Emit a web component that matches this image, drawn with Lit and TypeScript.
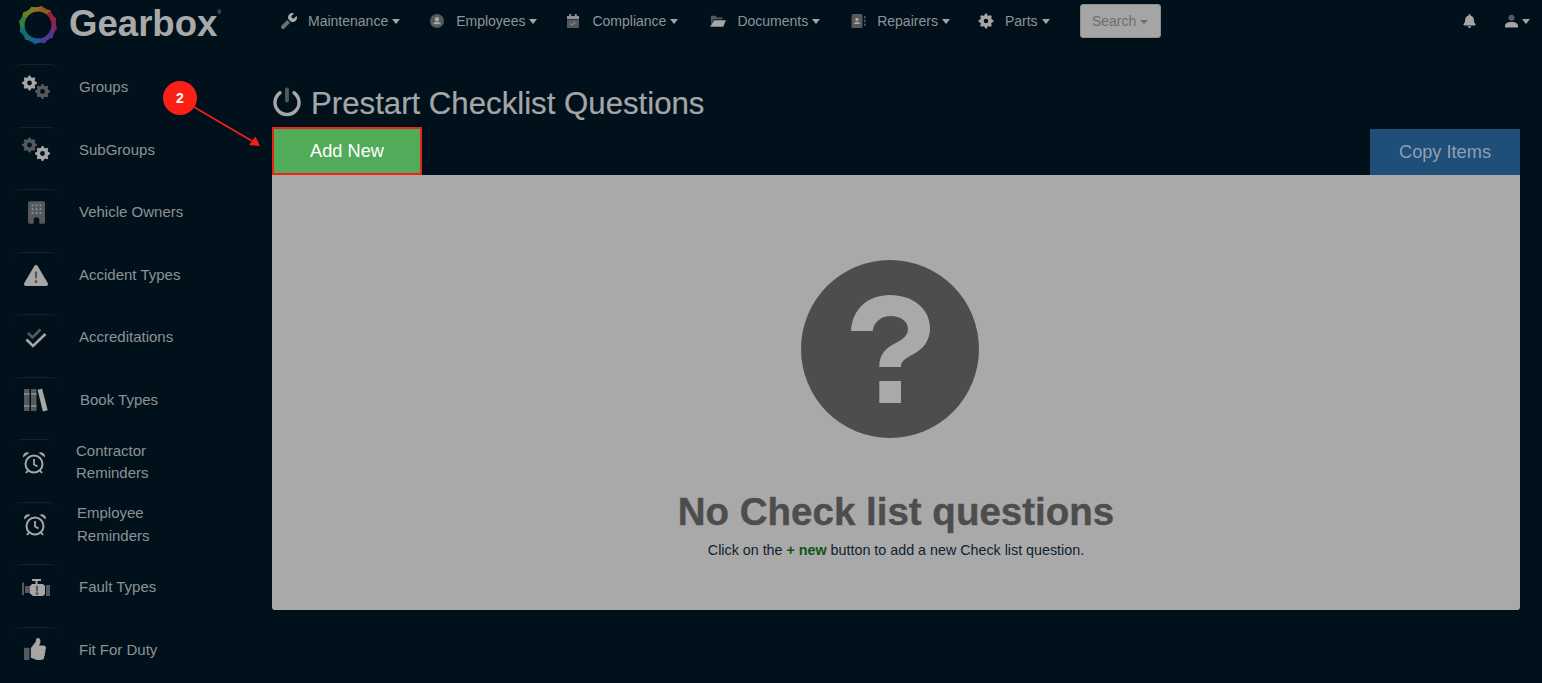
import { LitElement, html, css, svg } from "lit";
import { customElement } from "lit/decorators.js";

const L = "#a6a6a6";
const D = "#55595c";

function gear(cx: number, cy: number, r: number, hole: number, teeth = 8) {
  let d = "";
  const n = teeth * 4;
  for (let i = 0; i < n; i++) {
    const a = ((i - 0.5) / n) * Math.PI * 2;
    const rr = i % 4 === 0 || i % 4 === 1 ? r : r * 0.78;
    d += `${i ? "L" : "M"}${(cx + rr * Math.cos(a)).toFixed(2)} ${(cy + rr * Math.sin(a)).toFixed(2)}`;
  }
  d += `Z M${cx - hole} ${cy}a${hole} ${hole} 0 1 0 ${hole * 2} 0a${hole} ${hole} 0 1 0 ${-hole * 2} 0Z`;
  return d;
}

const BELL = "M224 512c35.32 0 63.97-28.65 63.97-64H160.03c0 35.35 28.65 64 63.97 64zm215.39-149.71c-19.32-20.76-55.47-51.99-55.47-154.29 0-77.7-54.48-139.9-127.94-155.16V32c0-17.67-14.32-32-31.98-32s-31.98 14.33-31.98 32v20.84C118.56 68.1 64.08 130.3 64.08 208c0 102.3-36.15 133.53-55.47 154.29-6 6.45-8.66 14.16-8.61 21.71.11 16.4 12.98 32 32.1 32h383.8c19.12 0 32-15.6 32.1-32 .05-7.55-2.61-15.27-8.61-21.71z";
const THUMB = "M384 81.452c0 42.416-25.97 66.208-33.277 94.548h101.723c33.397 0 59.397 27.746 59.553 58.098.084 17.938-7.546 37.249-19.439 49.197l-.11.11c9.836 23.337 8.237 56.037-9.308 79.469 8.681 25.895-.069 57.704-16.382 74.757 4.298 17.598 2.244 32.575-6.148 44.632C440.202 511.587 389.616 512 346.839 512l-2.845-.001c-48.287-.017-87.806-17.598-119.56-31.725-15.957-7.099-36.821-15.887-52.651-16.178-6.54-.12-11.783-5.457-11.783-11.998v-213.77c0-3.2 1.282-6.271 3.558-8.521 39.614-39.144 56.648-80.587 89.117-113.111 14.804-14.832 20.188-37.236 25.393-58.902C282.515 39.293 291.817 0 312 0c24 0 72 8 72 81.452z";

const navIcons: Record<string, unknown> = {
  wrench: svg`<svg viewBox="0 0 512 512" width="16" height="16"><path fill="#6d7073" d="M18.74 402.76L200 222l90 90-180.76 181.26c-25 25-65.5 25-90.5 0s-25-65.5 0-90.5z"/><path fill="#a9abac" d="M507.73 109.1c-2.24-9.03-13.54-12.09-20.12-5.51l-74.36 74.36-67.88-11.31-11.31-67.88 74.36-74.36c6.62-6.62 3.43-17.9-5.66-20.16-47.38-11.74-99.55.91-136.58 37.93-39.64 39.64-50.55 97.1-34.05 147.2l91 91c50.12 16.71 107.47 5.68 147.37-34.22 37.07-37.07 49.7-89.32 37.91-136.73z"/></svg>`,
  user: svg`<svg viewBox="0 0 16 16" width="16" height="16"><circle cx="8" cy="8" r="7" fill="#55595c"/><circle cx="8" cy="6.2" r="2.2" fill="#a6a6a6"/><path d="M4 11.2c.6-1.7 2-2.4 4-2.4s3.4.7 4 2.4z" fill="#a6a6a6"/></svg>`,
  calendar: svg`<svg viewBox="0 0 16 16" width="16" height="16"><path fill="#8e9092" d="M2 3h2.2V1h2v2h3.600V1h2v2H14v3H2z"/><path fill="#55595c" d="M2 6.500h12V14a1 1 0 0 1-1 1H3a1 1 0 0 1-1-1z"/><path fill="none" stroke="#a6a6a6" d="M5.800 10.500l1.600 1.600 2.900-3"/></svg>`,
  folder: svg`<svg viewBox="0 0 18 16" width="16" height="14"><path fill="#55595c" d="M1 2h5l2 2h6v2H4L1 12z"/><path fill="#a6a6a6" d="M4.500 7H18l-3 7.500H0z"/></svg>`,
  book: svg`<svg viewBox="0 0 16 16" width="16" height="16"><rect x="1.500" y="1" width="11" height="14" rx="1.500" fill="#55595c"/><circle cx="7" cy="6.500" r="1.700" fill="#a6a6a6"/><path d="M3.800 11c.4-1.500 1.600-2 3.200-2s2.800.5 3.200 2z" fill="#a6a6a6"/><path d="M14 3h1.500v2.500H14zM14 6.800h1.500v2.500H14zM14 10.500h1.500V13H14z" fill="#55595c"/></svg>`,
  cog: svg`<svg viewBox="0 0 16 16" width="16" height="16"><path fill-rule="evenodd" fill="#a6a6a6" d="${gear(8, 8, 7.5, 2.3)}"/></svg>`,
};

const sideIcons: Record<string, unknown> = {
  groups: svg`<svg viewBox="0 0 30 26" width="30" height="26"><path fill-rule="evenodd" fill="${L}" d="${gear(8.5, 8, 7.5, 2.4)}"/><path fill-rule="evenodd" fill="${D}" d="${gear(21.5, 16.5, 7.5, 2.4)}"/></svg>`,
  subgroups: svg`<svg viewBox="0 0 30 26" width="30" height="26"><path fill-rule="evenodd" fill="${D}" d="${gear(8.5, 8, 7.5, 2.4)}"/><path fill-rule="evenodd" fill="${L}" d="${gear(21.5, 16.5, 7.5, 2.4)}"/></svg>`,
  building: svg`<svg viewBox="0 0 18 24" width="17" height="23"><path fill="${D}" fill-rule="evenodd" d="M2 0h14a2 2 0 0 1 2 2v20a2 2 0 0 1-2 2h-4v-4a3 3 0 0 0-6 0v4H2a2 2 0 0 1-2-2V2a2 2 0 0 1 2-2z"/><path fill="#8b8d8e" d="M3.800 3.500h2v2h-2zM8 3.500h2v2H8zM12.200 3.500h2v2h-2zM3.800 7.500h2v2h-2zM8 7.500h2v2H8zM12.200 7.500h2v2h-2zM3.800 11.500h2v2h-2zM8 11.500h2v2H8zM12.200 11.500h2v2h-2z"/></svg>`,
  warn: svg`<svg viewBox="0 0 24 21" width="24" height="21"><path fill="${L}" d="M10.300 1a2 2 0 0 1 3.400 0l10 17a2 2 0 0 1-1.700 3H2a2 2 0 0 1-1.700-3z"/><path fill="${D}" d="M10.700 6.500h2.600l-.4 7h-1.800zM12 15a1.500 1.500 0 1 1 0 3 1.500 1.500 0 0 1 0-3z"/></svg>`,
  checks: svg`<svg viewBox="0 0 22 20" width="22" height="20"><path fill="none" stroke="${D}" stroke-width="2.6" d="M3 5l4.500 4.500L15.500 1.500" /><path fill="none" stroke="${L}" stroke-width="2.6" d="M1.500 11.500l6.500 6.500 12.500-12" /></svg>`,
  books: svg`<svg viewBox="0 0 24 24" width="24" height="24"><path fill="${D}" d="M0 1h5.500v22H0zM7 1h5.500v22H7z"/><path fill="${L}" d="M0 5h5.500v2H0zM0 17h5.500v2H0zM7 5h5.500v2H7zM7 17h5.500v2H7z" opacity=".55"/><path fill="${L}" d="M13.500 1.800l4.600-1 5.600 21.500-4.800 1.200z"/></svg>`,
  alarm: svg`<svg viewBox="0 0 24 24" width="24" height="24"><circle cx="12" cy="13" r="8.500" fill="none" stroke="${L}" stroke-width="2"/><path fill="none" stroke="${L}" stroke-width="1.8" d="M12 8v5.500l3.500 2"/><path fill="${L}" d="M1 6.500a4.500 4.500 0 0 1 6.500-4.800zM23 6.500a4.500 4.500 0 0 0-6.500-4.800z"/><path stroke="${L}" stroke-width="2" d="M6 19.500l-2 2.500M18 19.500l2 2.500"/></svg>`,
  engine: svg`<svg viewBox="0 0 28 18" width="28" height="18"><path fill="${D}" d="M0 3.500h2V16H0zM3 7h5v7H3zM24 6h4v11h-4z"/><path fill="${L}" d="M10 0h9v2h-3.500v3H21l2 2v8l-2 2H11l-3-2.500V7l2-2h3.500V2H10z"/><path fill="${D}" d="M13.800 6.800h2.400l-.3 5.700h-1.800zM15 13a1.500 1.500 0 1 1 0 3 1.500 1.500 0 0 1 0-3z"/></svg>`,
  thumb: svg`<svg class="thumb" viewBox="0 0 512 512" width="22" height="22"><path fill="${D}" d="M24 224h80c13 0 24 11 24 24v240c0 13-11 24-24 24H24c-13 0-24-11-24-24V248c0-13 11-24 24-24z"/><path fill="${L}" d="${THUMB}"/></svg>`,
};

interface Side { label: string[]; icon: string; cls?: string; }
const SIDE: Side[] = [
  { label: ["Groups"], icon: "groups" },
  { label: ["SubGroups"], icon: "subgroups" },
  { label: ["Vehicle Owners"], icon: "building" },
  { label: ["Accident Types"], icon: "warn" },
  { label: ["Accreditations"], icon: "checks" },
  { label: ["Book Types"], icon: "books", cls: "wide" },
  { label: ["Contractor", "Reminders"], icon: "alarm", cls: "narrow" },
  { label: ["Employee", "Reminders"], icon: "alarm", cls: "mid" },
  { label: ["Fault Types"], icon: "engine" },
  { label: ["Fit For Duty"], icon: "thumb" },
];

const NAV = [
  { label: "Maintenance", icon: "wrench", cls: "" },
  { label: "Employees", icon: "user", cls: "" },
  { label: "Compliance", icon: "calendar", cls: "less" },
  { label: "Documents", icon: "folder", cls: "more" },
  { label: "Repairers", icon: "book", cls: "some" },
  { label: "Parts", icon: "cog", cls: "less" },
];

function logo() {
  const stops: [number, string][] = [
    [0, "#95601e"], [30, "#9a2240"], [70, "#862560"], [110, "#523a90"], [165, "#1a609a"],
    [205, "#156f72"], [250, "#2f8340"], [295, "#708224"], [335, "#8e781f"], [360, "#95601e"],
  ];
  const color = (deg: number) => {
    for (let i = 0; i < stops.length - 1; i++) if (deg <= stops[i + 1][0]) return stops[i][1];
    return stops[0][1];
  };
  const out: unknown[] = [];
  const N = 36;
  for (let i = 0; i < N; i++) {
    const a0 = (i / N) * Math.PI * 2 - Math.PI / 2;
    const a1 = ((i + 1.1) / N) * Math.PI * 2 - Math.PI / 2;
    const ro = (k: number) => 18 + (k % 3 === 1 ? 1.5 : 0);
    const ri = 13.5;
    const p = [
      [20 + ri * Math.cos(a0), 20 + ri * Math.sin(a0)],
      [20 + ro(i) * Math.cos(a0), 20 + ro(i) * Math.sin(a0)],
      [20 + ro(i + 1) * Math.cos(a1), 20 + ro(i + 1) * Math.sin(a1)],
      [20 + ri * Math.cos(a1), 20 + ri * Math.sin(a1)],
    ].map((q) => q.map((v) => v.toFixed(2)).join(",")).join(" ");
    out.push(svg`<polygon points="${p}" fill="${color((i / N) * 360)}"/>`);
  }
  return html`<svg class="logo-mark" viewBox="0 0 40 40" width="40" height="40">${out}</svg>`;
}

@customElement("app-root")
export class AppRoot extends LitElement {
  static styles = css`
    :host {
      display: block;
      position: relative;
      height: 683px;
      overflow: hidden;
      background: #00111c;
      font-family: "Liberation Sans", Arial, sans-serif;
      color: #8d9194;
    }
    .header {
      display: flex;
      align-items: center;
      height: 42px;
      padding: 0 12px 0 18px;
    }
    .logo-mark { flex: none; margin-right: 11px; margin-top: 8px; }
    .brand {
      font-size: 36.6px;
      font-weight: 700;
      color: #a9a9a9;
      width: 212px;
      flex: none;
      margin-top: 6px;
    }
    .brand sup { font-size: 5px; font-weight: 400; vertical-align: 22px; line-height: 0; }
    .nav { display: flex; align-items: center; gap: 29px; flex: none; }
    .nav-item { display: flex; align-items: center; font-size: 14px; color: #8f9396; white-space: nowrap; }
    .nav-item.less { margin-left: -1px; }
    .nav-item.more { margin-left: 3px; }
    .nav-item.some { margin-left: 1px; }
    .nav-icon { display: flex; justify-content: center; width: 16px; margin-right: 11px; }
    .caret {
      width: 0; height: 0; margin-left: 4px; margin-top: 1px;
      border-left: 4.5px solid transparent;
      border-right: 4.5px solid transparent;
      border-top: 5px solid #a6a6a6;
    }
    .search {
      display: flex; align-items: center; justify-content: center; gap: 4px;
      width: 81px; height: 34px; box-sizing: border-box; margin-left: 30px;
      background: #a5a5a5; border: 1px solid #8e8e8e; border-radius: 3px;
      color: #6d6d6d; font-size: 14px;
    }
    .search .caret { border-top-color: #6d6d6d; border-left-width: 4px; border-right-width: 4px; border-top-width: 4px; margin-left: 0; }
    .right { margin-left: auto; display: flex; align-items: center; gap: 29px; }
    .user { display: flex; align-items: center; gap: 4px; }
    .user .caret { margin-left: 0; }
    .body { display: flex; }
    .sidebar { width: 272px; flex: none; padding: 22.4px 0 0 12px; box-sizing: border-box; }
    .side-item { display: flex; align-items: center; height: 46px; margin-bottom: 16.5px; font-size: 15px; }
    .side-box {
      display: flex; align-items: center; justify-content: center;
      width: 48px; height: 46px; flex: none; margin-right: 19px;
      box-sizing: border-box;
      border-top: 1px solid rgba(255,255,255,.07);
      border-radius: 9px 9px 0 0;
    }
    .thumb { margin: -3px 3px 0 0; }
    .wide .side-box { margin-right: 20px; }
    .narrow .side-box { width: 44px; margin-right: 20px; }
    .mid .side-box { width: 46px; margin-right: 19px; }
    .side-label { line-height: 22.5px; color: #8d9194; }
    .main { flex: 1; padding: 0 22px 0 0; min-width: 0; }
    .title-row { display: flex; align-items: center; gap: 9px; height: 46px; margin-top: 38px; }
    .title-row svg { margin-top: -3px; }
    .title { margin: 2px 0 0; font-size: 31.2px; line-height: 36px; font-weight: 400; color: #a4a6a8; -webkit-text-stroke: 0.2px #a4a6a8; white-space: nowrap; }
    .actions { display: flex; justify-content: space-between; align-items: flex-end; height: 47px; margin-top: 2px; }
    .btn { display: flex; align-items: center; justify-content: center; width: 150px; font-size: 18.2px; box-sizing: border-box; }
    .add { height: 48px; padding-top: 1px; background: #52ab58; color: #fff; border: 2px solid #f0201a; }
    .copy { height: 46px; background: #1f4e79; color: #8fa0b0; }
    .panel {
      height: 435px; background: #a9a9a9; border-radius: 0 0 3px 3px;
      display: flex; flex-direction: column; align-items: center;
      padding-top: 84px; box-sizing: border-box;
    }
    .panel svg { margin-right: 12px; }
    .panel h2 {
      margin: 47px 0 0; font-size: 38.5px; line-height: 52px; font-weight: 700; color: #4d4d4d;
      -webkit-text-stroke: 0.4px #4d4d4d;
    }
    .panel p { margin: 3px 0 0; font-size: 14.3px; line-height: 18px; color: #0e2230; }
    .panel b { color: #0f5512; }
    .overlay { position: absolute; left: 0; top: 0; pointer-events: none; }
    .badge {
      position: absolute; left: 163px; top: 81px; width: 34px; height: 34px; border-radius: 50%;
      background: #fb2016; color: #fff; font-size: 14px; font-weight: 700;
      display: flex; align-items: center; justify-content: center;
    }
  `;

  render() {
    return html`
      <div class="header">
        ${logo()}
        <div class="brand">Gearbox<sup>®</sup></div>
        <div class="nav">
          ${NAV.map((n) => html`<div class="nav-item ${n.cls}"><span class="nav-icon">${navIcons[n.icon]}</span>${n.label}<span class="caret"></span></div>`)}
        </div>
        <div class="search">Search<span class="caret"></span></div>
        <div class="right">
          <svg viewBox="0 0 448 512" width="13" height="14"><path fill="#a6a6a6" d="${BELL}"/></svg>
          <div class="user">
            <svg viewBox="0 0 14 14" width="13" height="14"><circle cx="7" cy="3.5" r="3.3" fill="#55595c"/><path d="M0 14v-1.500C0 9.500 2.500 8 7 8s7 1.500 7 4.500V14z" fill="#a6a6a6"/></svg>
            <span class="caret"></span>
          </div>
        </div>
      </div>
      <div class="body">
        <div class="sidebar">
          ${SIDE.map((s) => html`
            <div class="side-item ${s.cls ?? ""}">
              <div class="side-box">${sideIcons[s.icon]}</div>
              <div class="side-label">${s.label.map((l, i) => html`${i ? html`<br />` : ""}${l}`)}</div>
            </div>`)}
        </div>
        <div class="main">
          <div class="title-row">
            <svg viewBox="0 0 30 30" width="30" height="30">
              <path fill="none" stroke="#a6a6a6" stroke-width="3.4" stroke-linecap="round" d="M8 5.750a12 12 0 1 0 14 0"/>
              <path stroke="#55595c" stroke-width="3.8" stroke-linecap="round" d="M15 2.500v11"/>
            </svg>
            <h1 class="title">Prestart Checklist Questions</h1>
          </div>
          <div class="actions">
            <div class="btn add">Add New</div>
            <div class="btn copy">Copy Items</div>
          </div>
          <div class="panel">
            <svg viewBox="0 0 180 180" width="180" height="180">
              <circle cx="90" cy="90" r="89" fill="#4d4d4d"/>
              <path fill="#a9a9a9" d="M51 72C52 50 68 36 90 36C113 36 130 50 130 69C130 86 118 93 110 97C103 101 101 103 101 108L79.300 108C79.300 96 85 90 93 85.500C102 81 108 77 108 70C108 62 100 57 91 57C81 57 74 63 72.700 72Z"/>
              <rect x="79.3" y="122" width="21.7" height="22" fill="#a9a9a9"/>
            </svg>
            <h2>No Check list questions</h2>
            <p>Click on the <b>+ new</b> button to add a new Check list question.</p>
          </div>
        </div>
      </div>
      <svg class="overlay" width="300" height="160" viewBox="0 0 300 160">
        <path d="M194 107L252 141" stroke="#f0201a" stroke-width="1.8" fill="none"/>
        <path d="M260 146L249 145L255.500 136.500Z" fill="#f0201a"/>
      </svg>
      <div class="badge">2</div>
    `;
  }
}
